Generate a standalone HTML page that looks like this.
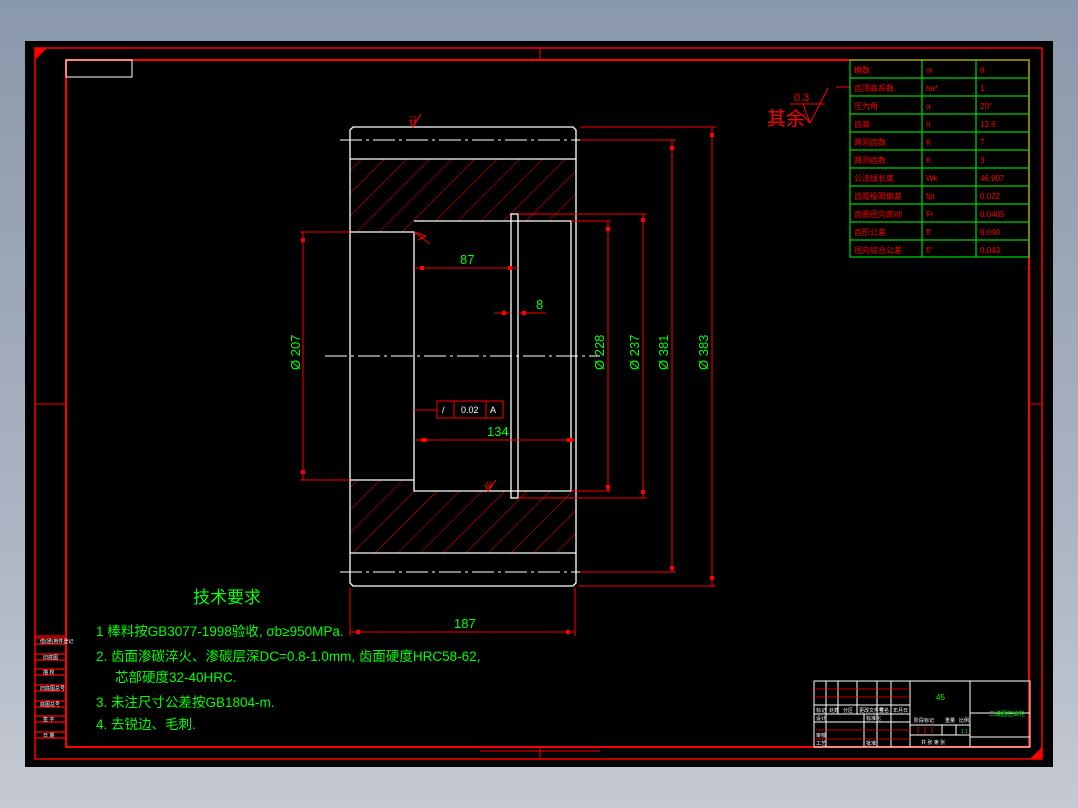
<!DOCTYPE html>
<html><head><meta charset="utf-8"><style>
html,body{margin:0;padding:0;}
body{width:1078px;height:808px;overflow:hidden;background:linear-gradient(#8a98ab,#a9b2c1 60%,#c5c9d3);}
svg{display:block}
text{font-family:"Liberation Sans","Noto Sans CJK SC",sans-serif;}
</style></head><body>
<svg width="1078" height="808" viewBox="0 0 1078 808" xmlns="http://www.w3.org/2000/svg">
<defs>
<pattern id="h" patternUnits="userSpaceOnUse" width="16" height="16" patternTransform="rotate(45)">
<line x1="0" y1="0" x2="0" y2="16" stroke="#ff0000" stroke-width="1"/>
</pattern>
</defs>
<rect x="25" y="41" width="1028" height="726" fill="#000"/>
<!-- frames -->
<rect x="35" y="48" width="1007" height="711" fill="none" stroke="#f00" stroke-width="1.5"/>
<polygon points="35,48 47,48 35,60" fill="#f00"/>
<polygon points="1042,759 1030,759 1042,747" fill="#f00"/>
<rect x="66" y="60" width="963" height="687" fill="none" stroke="#f00" stroke-width="2"/>
<rect x="66" y="60" width="66" height="17" fill="none" stroke="#fff" stroke-width="1"/>
<!-- tick marks -->
<g stroke="#f00" stroke-width="1">
<line x1="540" y1="48" x2="540" y2="60"/><line x1="540" y1="747" x2="540" y2="759"/>
<line x1="35" y1="404" x2="66" y2="404"/><line x1="1029" y1="404" x2="1042" y2="404"/>
<line x1="480" y1="751" x2="600" y2="751"/>
</g>
<!-- hatch -->
<polygon points="350,159 576,159 576,221 518,221 518,214 511,214 511,221 414,221 414,232 350,232" fill="url(#h)"/>
<polygon points="350,480 414,480 414,491 511,491 511,498 518,498 518,491 576,491 576,553 350,553" fill="url(#h)"/>
<!-- part outline -->
<g stroke="#fff" stroke-width="1.3" fill="none">
<path d="M353,127 L573,127 L576,130 L576,583 L573,586 L353,586 L350,583 L350,130 Z"/>
<line x1="350" y1="159" x2="576" y2="159"/>
<line x1="350" y1="553" x2="576" y2="553"/>
<polyline points="350,232 414,232 414,491 571,491 571,221 414,221"/>
<line x1="350" y1="480" x2="414" y2="480"/>
<rect x="511" y="214" width="7" height="284"/>
</g>
<!-- centerlines -->
<g stroke="#fff" stroke-width="1" stroke-dasharray="22,4,3,4">
<line x1="325" y1="356" x2="600" y2="356"/>
<line x1="340" y1="140" x2="580" y2="140"/>
<line x1="340" y1="572" x2="580" y2="572"/>
</g>
<!-- dimension lines -->
<g stroke="#f00" stroke-width="1" fill="none">
<line x1="580" y1="127" x2="716" y2="127"/><line x1="712" y1="127" x2="712" y2="586"/><line x1="578" y1="586" x2="716" y2="586"/>
<line x1="580" y1="140" x2="676" y2="140"/><line x1="672" y1="140" x2="672" y2="572"/><line x1="580" y1="572" x2="676" y2="572"/>
<line x1="518" y1="214" x2="647" y2="214"/><line x1="643" y1="214" x2="643" y2="498"/><line x1="518" y1="498" x2="647" y2="498"/>
<line x1="571" y1="221" x2="611" y2="221"/><line x1="608" y1="221" x2="608" y2="491"/><line x1="571" y1="491" x2="611" y2="491"/>
<line x1="300" y1="232" x2="350" y2="232"/><line x1="303" y1="232" x2="303" y2="480"/><line x1="300" y1="480" x2="350" y2="480"/>
<line x1="414" y1="268" x2="518" y2="268"/>
<line x1="494" y1="313" x2="511" y2="313"/><line x1="518" y1="313" x2="546" y2="313"/>
<line x1="414" y1="440" x2="575" y2="440"/>
<line x1="350" y1="588" x2="350" y2="636"/><line x1="575" y1="588" x2="575" y2="636"/><line x1="350" y1="632" x2="575" y2="632"/>
<line x1="414" y1="410" x2="437" y2="410"/>
<rect x="437" y="401" width="66" height="17"/><line x1="454" y1="401" x2="454" y2="418"/><line x1="486" y1="401" x2="486" y2="418"/>
<line x1="836" y1="87" x2="850" y2="87"/>
</g>
<g fill="#f00">
<rect x="710" y="133" width="4" height="4"/><rect x="710" y="576" width="4" height="4"/>
<rect x="670" y="146" width="4" height="4"/><rect x="670" y="566" width="4" height="4"/>
<rect x="641" y="218" width="4" height="4"/><rect x="641" y="490" width="4" height="4"/>
<rect x="606" y="227" width="4" height="4"/><rect x="606" y="485" width="4" height="4"/>
<rect x="301" y="238" width="4" height="4"/><rect x="301" y="470" width="4" height="4"/>
<rect x="420" y="266" width="4" height="4"/><rect x="508" y="266" width="4" height="4"/>
<rect x="421" y="438" width="6" height="4"/><rect x="567" y="438" width="6" height="4"/>
<rect x="356" y="630" width="4" height="4"/><rect x="566" y="630" width="4" height="4"/>
<rect x="502" y="311" width="4" height="4"/><rect x="522" y="311" width="4" height="4"/>
</g>
<!-- roughness -->
<g stroke="#f00" stroke-width="1" fill="none">
<path d="M410,120 L413,127 L416,120 M413,127 L421,114"/>
<path d="M485,485 L488,491 L491,485 M488,491 L496,480"/>
<path d="M414,232 L426,236 L418,240 M414,232 L430,244"/>
<path d="M790,104 L825,104 M803,115 L810,123 L828,88"/>
<path d="M803,104 L810,123"/>
</g>
<text x="794" y="101" font-size="11" fill="#f00">0.3</text>
<text x="767" y="125" font-size="19" fill="#f00">其余</text>
<text x="409" y="121" font-size="7" fill="#f00">12</text>
<text x="485" y="487" font-size="7" fill="#f00">32</text>
<!-- dim text -->
<g fill="#00ff00" font-size="13">
<text x="460" y="264">87</text>
<text x="536" y="309">8</text>
<text x="487" y="436">134</text>
<text x="454" y="628">187</text>
<text transform="translate(300,370) rotate(-90)">Ø 207</text>
<text transform="translate(604,370) rotate(-90)">Ø 228</text>
<text transform="translate(639,370) rotate(-90)">Ø 237</text>
<text transform="translate(668,370) rotate(-90)">Ø 381</text>
<text transform="translate(708,370) rotate(-90)">Ø 383</text>
</g>
<g fill="#fff" font-size="9"><text x="442" y="413">/</text><text x="461" y="413">0.02</text><text x="490" y="413">A</text></g>
<!-- tech requirements -->
<g fill="#00ff00">
<text x="193" y="603" font-size="17">技术要求</text>
<g font-size="13.5">
<text x="96" y="636">1  棒料按GB3077-1998验收, σb≥950MPa.</text>
<text x="96" y="661">2. 齿面渗碳淬火、渗碳层深DC=0.8-1.0mm, 齿面硬度HRC58-62,</text>
<text x="115" y="682">芯部硬度32-40HRC.</text>
<text x="96" y="707">3. 未注尺寸公差按GB1804-m.</text>
<text x="96" y="729">4. 去锐边、毛刺.</text>
</g></g>
<!-- parameter table -->
<g stroke="#00ff00" stroke-width="1" fill="none">
<rect x="850" y="60" width="179" height="197"/>
<line x1="922" y1="60" x2="922" y2="257"/><line x1="976" y1="60" x2="976" y2="257"/>
<line x1="850" y1="78" x2="1029" y2="78"/><line x1="850" y1="96" x2="1029" y2="96"/><line x1="850" y1="114" x2="1029" y2="114"/>
<line x1="850" y1="132" x2="1029" y2="132"/><line x1="850" y1="150" x2="1029" y2="150"/><line x1="850" y1="168" x2="1029" y2="168"/>
<line x1="850" y1="186" x2="1029" y2="186"/><line x1="850" y1="204" x2="1029" y2="204"/><line x1="850" y1="222" x2="1029" y2="222"/>
<line x1="850" y1="240" x2="1029" y2="240"/>
</g>
<g fill="#f00" font-size="8">
<text x="854" y="73">模数</text><text x="926" y="73">m</text><text x="980" y="73">8</text>
<text x="854" y="91">齿顶高系数</text><text x="926" y="91">ha*</text><text x="980" y="91">1</text>
<text x="854" y="109">压力角</text><text x="926" y="109">α</text><text x="980" y="109">20°</text>
<text x="854" y="127">齿高</text><text x="926" y="127">h</text><text x="980" y="127">13.6</text>
<text x="854" y="145">跨测齿数</text><text x="926" y="145">K</text><text x="980" y="145">7</text>
<text x="854" y="163">跨测齿数</text><text x="926" y="163">K</text><text x="980" y="163">3</text>
<text x="854" y="181">公法线长度</text><text x="926" y="181">Wk</text><text x="980" y="181">46.907</text>
<text x="854" y="199">齿距极限偏差</text><text x="926" y="199">fpt</text><text x="980" y="199">0.022</text>
<text x="854" y="217">齿圈径向跳动</text><text x="926" y="217">Fr</text><text x="980" y="217">0.0405</text>
<text x="854" y="235">齿形公差</text><text x="926" y="235">ff</text><text x="980" y="235">0.040</text>
<text x="854" y="253">径向综合公差</text><text x="926" y="253">fi"</text><text x="980" y="253">0.043</text>
</g>
<!-- left strip -->
<g stroke="#f00" stroke-width="1.3" fill="none">
<line x1="66" y1="636" x2="35" y2="636"/>
<rect x="35" y="638" width="31" height="6"/><rect x="35" y="654" width="31" height="6"/>
<rect x="35" y="669" width="31" height="6"/><rect x="35" y="685" width="31" height="6"/>
<rect x="35" y="701" width="31" height="6"/><rect x="35" y="716" width="31" height="6"/>
<rect x="35" y="732" width="31" height="6"/>
</g>
<g fill="#fff" font-size="5"><text x="40" y="643">借(通)用件登记</text><text x="43" y="659">旧底图</text><text x="43" y="674">描 校</text><text x="40" y="690">旧底图总号</text><text x="40" y="706">底图总号</text><text x="43" y="721">签 字</text><text x="43" y="737">日 期</text></g>
<!-- title block -->
<g stroke="#fff" stroke-width="1" fill="none">
<rect x="814" y="681" width="216" height="66"/>
<line x1="910" y1="681" x2="910" y2="747"/><line x1="970" y1="681" x2="970" y2="747"/>
<line x1="970" y1="713" x2="1030" y2="713"/><line x1="970" y1="737" x2="1030" y2="737"/>
<line x1="814" y1="705" x2="910" y2="705"/><line x1="814" y1="714" x2="910" y2="714"/><line x1="814" y1="722" x2="910" y2="722"/>
<line x1="910" y1="725" x2="970" y2="725"/><line x1="910" y1="735" x2="970" y2="735"/>
<line x1="826" y1="681" x2="826" y2="747"/><line x1="838" y1="681" x2="838" y2="714"/><line x1="857" y1="681" x2="857" y2="714"/>
<line x1="864" y1="714" x2="864" y2="747"/><line x1="877" y1="681" x2="877" y2="747"/><line x1="891" y1="681" x2="891" y2="747"/>
<line x1="942" y1="725" x2="942" y2="735"/><line x1="956" y1="725" x2="956" y2="735"/>
</g>
<g stroke="#f00" stroke-width="0.8"><line x1="814" y1="689" x2="910" y2="689"/><line x1="814" y1="697" x2="910" y2="697"/><line x1="814" y1="730" x2="910" y2="730"/><line x1="814" y1="739" x2="910" y2="739"/>
<line x1="918" y1="727" x2="918" y2="734"/><line x1="925" y1="727" x2="925" y2="734"/><line x1="932" y1="727" x2="932" y2="734"/></g>
<g fill="#fff" font-size="5"><text x="816" y="712">标记</text><text x="829" y="712">处数</text><text x="843" y="712">分区</text><text x="859" y="712">更改文件号</text><text x="879" y="712">签名</text><text x="893" y="712">年月日</text>
<text x="816" y="720">设计</text><text x="866" y="720">标准化</text><text x="816" y="737">审核</text><text x="816" y="745">工艺</text><text x="866" y="745">批准</text>
<text x="914" y="722">阶段标记</text><text x="945" y="722">重量</text><text x="959" y="722">比例</text><text x="921" y="744">共  张 第  张</text></g>
<text x="936" y="700" font-size="8" fill="#00ff00">45</text>
<text x="989" y="716" font-size="6" fill="#00ff00">二级圆柱齿轮</text>
<text x="961" y="733" font-size="5" fill="#00ff00">1:1</text>
</svg>
</body></html>
